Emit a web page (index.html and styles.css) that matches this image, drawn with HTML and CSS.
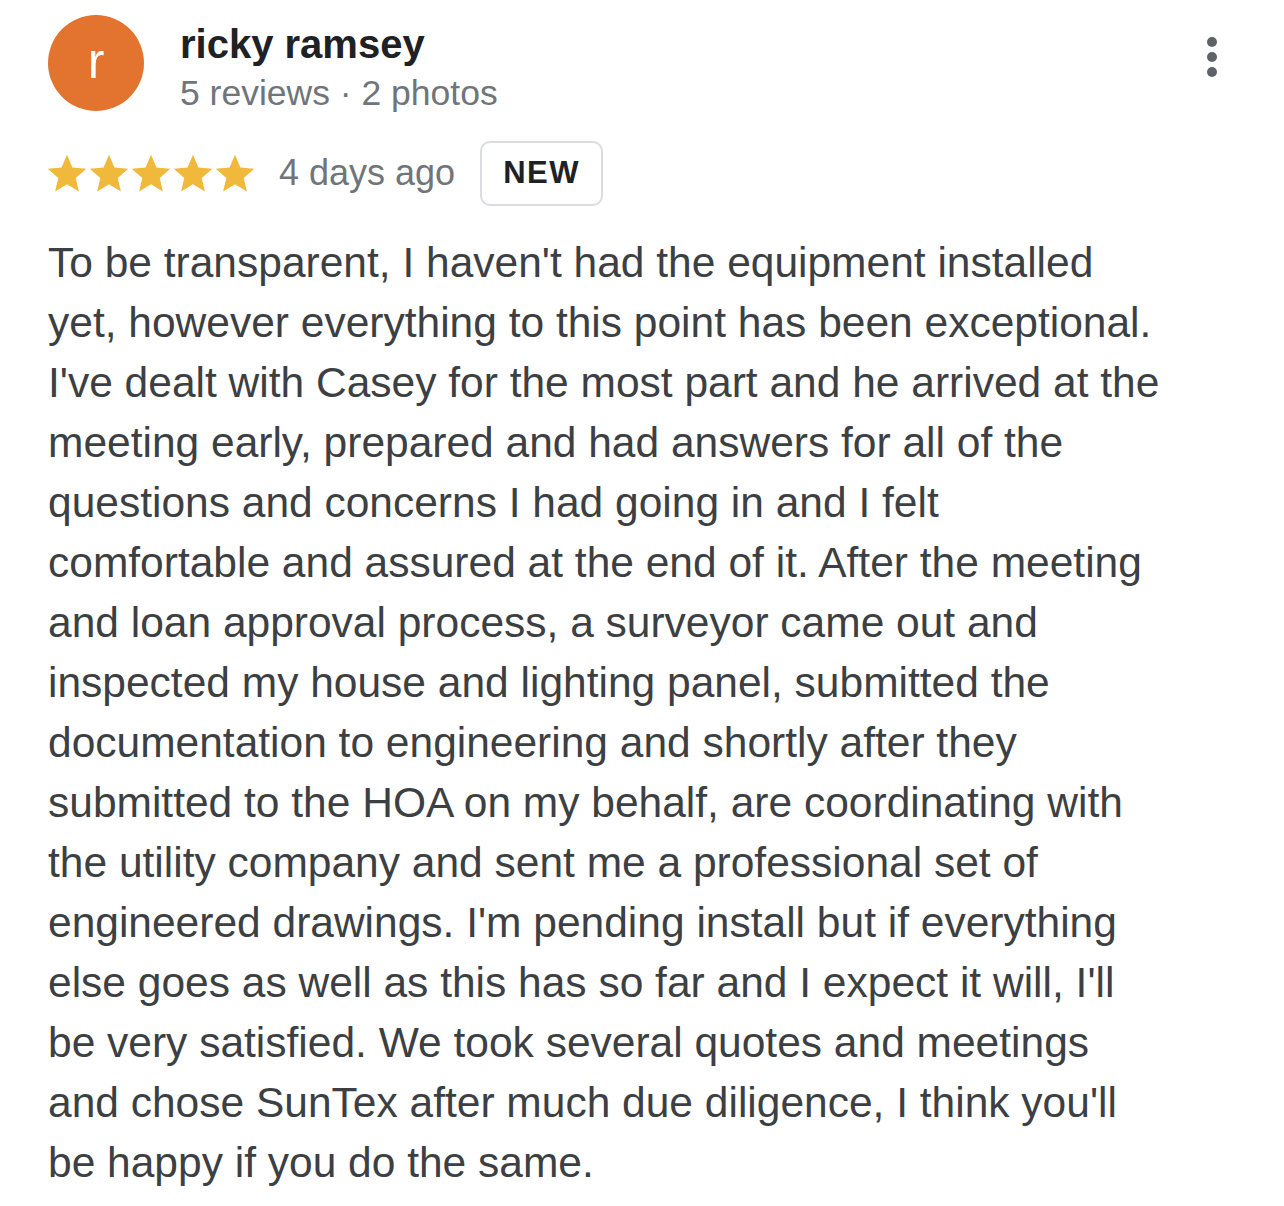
FILE: index.html
```html
<!DOCTYPE html>
<html>
<head>
<meta charset="utf-8">
<link rel="stylesheet" href="styles.css">
</head>
<body>
<div class="review">
  <div class="header">
    <div class="avatar">r</div>
    <div class="who">
      <div class="name">ricky ramsey</div>
      <div class="meta">5 reviews · 2 photos</div>
    </div>
    <div class="more"><span></span><span></span><span></span></div>
  </div>
  <div class="rating">
    <div class="stars">
      <svg viewBox="0 0 24 24"><path d="M12 1.6l3.1 7.3 7.9.7-6 5.2 1.8 7.8L12 18.4l-6.8 4.2 1.8-7.8-6-5.2 7.9-.7z"/></svg>
      <svg viewBox="0 0 24 24"><path d="M12 1.6l3.1 7.3 7.9.7-6 5.2 1.8 7.8L12 18.4l-6.8 4.2 1.8-7.8-6-5.2 7.9-.7z"/></svg>
      <svg viewBox="0 0 24 24"><path d="M12 1.6l3.1 7.3 7.9.7-6 5.2 1.8 7.8L12 18.4l-6.8 4.2 1.8-7.8-6-5.2 7.9-.7z"/></svg>
      <svg viewBox="0 0 24 24"><path d="M12 1.6l3.1 7.3 7.9.7-6 5.2 1.8 7.8L12 18.4l-6.8 4.2 1.8-7.8-6-5.2 7.9-.7z"/></svg>
      <svg viewBox="0 0 24 24"><path d="M12 1.6l3.1 7.3 7.9.7-6 5.2 1.8 7.8L12 18.4l-6.8 4.2 1.8-7.8-6-5.2 7.9-.7z"/></svg>
    </div>
    <span class="when">4 days ago</span>
    <span class="badge">NEW</span>
  </div>
  <p class="text">To be transparent, I haven't had the equipment installed<br>yet, however everything to this point has been exceptional.<br>I've dealt with Casey for the most part and he arrived at the<br>meeting early, prepared and had answers for all of the<br>questions and concerns I had going in and I felt<br>comfortable and assured at the end of it. After the meeting<br>and loan approval process, a surveyor came out and<br>inspected my house and lighting panel, submitted the<br>documentation to engineering and shortly after they<br>submitted to the HOA on my behalf, are coordinating with<br>the utility company and sent me a professional set of<br>engineered drawings. I'm pending install but if everything<br>else goes as well as this has so far and I expect it will, I'll<br>be very satisfied. We took several quotes and meetings<br>and chose SunTex after much due diligence, I think you'll<br>be happy if you do the same.</p>
</div>
</body>
</html>
```

FILE: styles.css
```css
html, body {
  margin: 0;
  padding: 0;
  background: #ffffff;
}
body {
  font-family: "Liberation Sans", Arial, sans-serif;
  color: #3c4043;
}
.review {
  padding: 15px 48px 0 48px;
}
.header {
  display: flex;
  align-items: flex-start;
}
.avatar {
  width: 96px;
  height: 96px;
  border-radius: 50%;
  background: #e2742f;
  color: #fff;
  font-size: 50px;
  line-height: 92px;
  text-align: center;
  flex: none;
}
.who {
  margin-left: 36px;
  flex: 1;
}
.name {
  font-size: 40px;
  font-weight: bold;
  color: #202124;
  line-height: 46px;
  margin-top: 6px;
}
.meta {
  font-size: 35.5px;
  color: #70757a;
  line-height: 44px;
  margin-top: 4px;
}
.more {
  display: flex;
  flex-direction: column;
  gap: 5px;
  margin-top: 22px;
  margin-right: 19px;
}
.more span {
  width: 10px;
  height: 10px;
  border-radius: 50%;
  background: #5f6368;
}
.rating {
  display: flex;
  align-items: center;
  margin-top: 26px;
  height: 64px;
}
.stars {
  display: flex;
  gap: 0;
  margin-left: -2px;
}
.stars svg {
  width: 42px;
  height: 42px;
  fill: #f0b93b;
}
.when {
  font-size: 36px;
  color: #70757a;
  margin-left: 23px;
}
.badge {
  margin-left: 25px;
  box-sizing: border-box;
  height: 65px;
  width: 123px;
  border: 2px solid #dadce0;
  border-radius: 10px;
  font-size: 31px;
  font-weight: bold;
  color: #202124;
  display: flex;
  align-items: center;
  justify-content: center;
  letter-spacing: 1.5px;
}
.text {
  margin: 28px 0 0 0;
  font-size: 42.5px;
  line-height: 60px;
  color: #3c4043;
}
```
